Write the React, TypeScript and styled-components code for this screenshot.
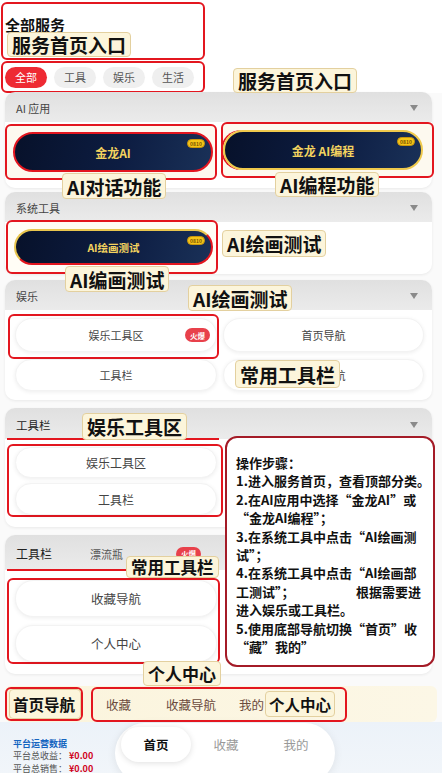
import React from 'react'
import styled, { createGlobalStyle, css } from 'styled-components'

const RED = '#e3161f'

const GlobalStyle = createGlobalStyle`
  * { box-sizing: border-box; }
  html, body { margin: 0; padding: 0; background: #fafafa; }
  body { font-family: "Noto Sans CJK SC", "Noto Sans", sans-serif; }
`

const Page = styled.div`
  position: relative;
  width: 442px;
  height: 773px;
  overflow: hidden;
  display: flex;
  flex-direction: column;
  background: #fafafa;
`

const Top = styled.header`
  flex: none;
  background: #fff;
  padding: 2px 0 0 1px;
  display: flex;
  flex-direction: column;
  gap: 1px;
`

// red annotation frame that wraps a group of content
const Marked = styled.div<{ $w: number; $h: number; $bg?: string; $mt?: number; $ml?: number }>`
  position: relative;
  flex: none;
  width: ${p => p.$w}px;
  height: ${p => p.$h}px;
  margin: ${p => p.$mt ?? 0}px 0 0 ${p => p.$ml ?? 0}px;
  border: 2px solid ${RED};
  border-radius: 6px;
  background: ${p => p.$bg ?? 'transparent'};
`

const TitleBox = styled(Marked)`
  padding: 11px 0 0 2px;
`

const PageTitle = styled.h1`
  margin: 0;
  font-size: 15px;
  font-weight: 700;
  line-height: 20px;
  color: #111;
`

const ChipRow = styled(Marked)`
  display: flex;
  align-items: center;
  gap: 7px;
  padding-left: 2px;
`

const Chip = styled.span<{ $active?: boolean }>`
  width: 42px;
  height: 21px;
  border-radius: 11px;
  display: flex;
  align-items: center;
  justify-content: center;
  font-size: 11px;
  background: ${p => (p.$active ? '#ee2a33' : '#efefef')};
  color: ${p => (p.$active ? '#fff' : '#555')};
`

const Card = styled.section<{ $mt: number }>`
  flex: none;
  margin: ${p => p.$mt}px 10px 0 5px;
  border-radius: 10px;
  background: #fff;
  box-shadow: 0 1px 3px rgba(0, 0, 0, 0.07);
`

const CardHead = styled.div<{ $h?: number; $line?: boolean }>`
  position: relative;
  height: ${p => p.$h ?? 30}px;
  display: flex;
  align-items: center;
  padding: 2px 14px 0 11px;
  border-radius: 10px 10px 0 0;
  background: linear-gradient(180deg, #e0e0e0, #ebebeb);
  ${p =>
    p.$line &&
    css`
      &::after {
        content: '';
        position: absolute;
        left: 2px;
        bottom: -1px;
        width: 212px;
        height: 2px;
        background: ${RED};
      }
    `}
`

const HeadTitle = styled.span<{ $fs?: number; $dark?: boolean }>`
  font-size: ${p => p.$fs ?? 11}px;
  color: ${p => (p.$dark ? '#222' : '#444')};
`

const HeadSub = styled.span`
  margin-left: 38px;
  font-size: 11px;
  color: #555;
`

const Caret = styled.span`
  margin-left: auto;
  width: 0;
  height: 0;
  border-left: 4.5px solid transparent;
  border-right: 4.5px solid transparent;
  border-top: 6px solid #8a8a8a;
`

const HotBadge = styled.span<{ $ml?: number }>`
  display: inline-flex;
  align-items: center;
  justify-content: center;
  width: 25px;
  height: 14px;
  margin-left: ${p => p.$ml ?? 0}px;
  border-radius: 7px;
  background: #e8414b;
  color: #fff;
  font-size: 7.5px;
  font-weight: 700;
`

const PillHot = styled(HotBadge)`
  position: absolute;
  top: 9px;
  right: 6px;
`

const DuoBody = styled.div`
  height: 66px;
  display: grid;
  grid-template-columns: 212px 213px;
  column-gap: 4px;
  align-items: start;
`

const SoloBody = styled.div<{ $h: number }>`
  height: ${p => p.$h}px;
  display: flex;
  flex-direction: column;
`

const PillBox = styled(Marked)<{ $pl: number }>`
  display: flex;
  align-items: center;
  padding-left: ${p => p.$pl}px;
`

const GoldPill = styled.div<{ $w: number; $h: number; $fs: number; $trim: 'red' | 'gold' | 'mix' }>`
  position: relative;
  width: ${p => p.$w}px;
  height: ${p => p.$h}px;
  border-radius: 999px;
  border: 2px solid ${RED};
  ${p =>
    p.$trim === 'gold' &&
    css`
      border-color: #efc94c;
      box-shadow: -2px 0 0 0 ${RED};
    `}
  ${p =>
    p.$trim === 'mix' &&
    css`
      border-top-color: #e8c54e;
      border-left-color: #e8c54e;
    `}
  background: linear-gradient(105deg, #07112a 0%, #0d1d42 55%, #1a3158 100%);
  display: flex;
  align-items: center;
  justify-content: center;
  color: #f3d35f;
  font-weight: 700;
  font-size: ${p => p.$fs}px;
`

const GoldTag = styled.span`
  position: absolute;
  top: 5px;
  right: 6px;
  width: 18px;
  height: 9px;
  border-radius: 5px;
  background: #f5c518;
  border: 1px solid #c9960c;
  font-size: 5px;
  line-height: 7px;
  text-align: center;
  color: #7a5200;
`

const GridBody = styled.div`
  height: 90px;
  display: grid;
  grid-template-columns: 202px 201px;
  grid-template-rows: 34px 32px;
  column-gap: 6px;
  row-gap: 7px;
  padding: 8px 0 0 10px;
`

const ToolPill = styled.div<{ $h?: number; $fs?: number; $marked?: boolean }>`
  position: relative;
  height: ${p => (p.$h ? `${p.$h}px` : 'auto')};
  border-radius: 18px;
  background: #fff;
  border: 1px solid #f3f3f3;
  box-shadow: 0 1px 4px rgba(0, 0, 0, 0.07);
  display: flex;
  align-items: center;
  justify-content: center;
  font-size: ${p => p.$fs ?? 11}px;
  color: #444;
  ${p =>
    p.$marked &&
    css`
      &::after {
        content: '';
        position: absolute;
        inset: -5px -3px -8px -8px;
        border: 2px solid ${RED};
        border-radius: 6px;
      }
    `}
`

const StackBox = styled(Marked)<{ $gap: number; $pt: number }>`
  display: flex;
  flex-direction: column;
  gap: ${p => p.$gap}px;
  padding: ${p => p.$pt}px 0 0 6px;
  ${ToolPill} {
    width: 202px;
  }
`

const Steps = styled.aside`
  position: absolute;
  left: 225px;
  top: 436px;
  width: 210px;
  height: 231px;
  z-index: 3;
  border: 2px solid #a41b27;
  border-radius: 12px;
  background: #fff;
  padding: 16px 6px 0 9px;
  font-size: 13px;
  font-weight: 700;
  line-height: 18.4px;
  color: #111;
`

const StepLine = styled.div<{ $spread?: boolean }>`
  white-space: nowrap;
  ${p =>
    p.$spread &&
    css`
      display: flex;
      justify-content: space-between;
      padding-right: 6px;
    `}
`

const tagLook = css`
  display: flex;
  align-items: center;
  padding: 0 4px;
  background: #fcf5db;
  border: 1px solid #e3d09f;
  border-radius: 4px;
  font-weight: 700;
  color: #111;
  white-space: nowrap;
`

const Tag = styled.span<{ $x: number; $y: number; $h: number; $fs: number }>`
  ${tagLook}
  position: absolute;
  z-index: 4;
  left: ${p => p.$x}px;
  top: ${p => p.$y}px;
  height: ${p => p.$h}px;
  font-size: ${p => p.$fs}px;
`

const InlineTag = styled.span<{ $h: number; $fs: number; $ml?: number }>`
  ${tagLook}
  height: ${p => p.$h}px;
  margin-left: ${p => p.$ml ?? 0}px;
  font-size: ${p => p.$fs}px;
  padding: 0 3px;
`

const NavBar = styled.nav`
  flex: none;
  margin: 12px 5px 0 5px;
  height: 36px;
  display: flex;
  align-items: center;
  background: linear-gradient(90deg, #fbf4dc, #fcf7e6);
  border-radius: 6px;
`

const NavGroup = styled(Marked)`
  display: flex;
  align-items: center;
  padding-left: 13px;
`

const NavLink = styled.span<{ $ml?: number }>`
  margin-left: ${p => p.$ml ?? 0}px;
  font-size: 12.5px;
  color: #6b4a3c;
`

const Footer = styled.footer`
  flex: 1;
  display: flex;
  padding-left: 13px;
  background: linear-gradient(180deg, #ecf2f9, #f2f6fa);
`

const Stats = styled.div`
  width: 102px;
  padding-top: 15px;
  font-size: 9px;
  line-height: 12.5px;
  color: #555;
`

const StatsTitle = styled.div`
  color: #1565c0;
  font-weight: 700;
  line-height: 13px;
`

const Money = styled.b`
  color: #d0021b;
`

const TabPill = styled.div`
  margin-top: 1px;
  width: 220px;
  height: 60px;
  border-radius: 30px;
  background: #fff;
  box-shadow: 0 2px 10px rgba(0, 0, 0, 0.08);
  display: flex;
  align-items: flex-start;
  padding: 4px 4px 0 6px;
`

const Tab = styled.span<{ $active?: boolean }>`
  width: 70px;
  height: 35px;
  border-radius: 18px;
  display: flex;
  align-items: center;
  justify-content: center;
  font-size: 12.5px;
  color: ${p => (p.$active ? '#111' : '#999')};
  font-weight: ${p => (p.$active ? 700 : 400)};
  ${p =>
    p.$active &&
    css`
      background: #fff;
      box-shadow: 0 1px 6px rgba(0, 0, 0, 0.13);
    `}
`

const chips = ['全部', '工具', '娱乐', '生活']

const steps = [
  '操作步骤：',
  '1.进入服务首页，查看顶部分类。',
  '2.在AI应用中选择“金龙AI”或',
  '“金龙AI编程”；',
  '3.在系统工具中点击“AI绘画测',
  '试”；',
  '4.在系统工具中点击“AI绘画部',
  null,
  '进入娱乐或工具栏。',
  '5.使用底部导航切换“首页”收',
  '“藏”我的”',
]

const tags = [
  { t: '服务首页入口', x: 7, y: 32, h: 25, fs: 19 },
  { t: '服务首页入口', x: 233, y: 68, h: 25, fs: 19 },
  { t: 'AI对话功能', x: 62, y: 173, h: 26, fs: 19 },
  { t: 'AI编程功能', x: 275, y: 172, h: 25, fs: 19 },
  { t: 'AI绘画测试', x: 222, y: 230, h: 27, fs: 19 },
  { t: 'AI编画测试', x: 65, y: 266, h: 26, fs: 19 },
  { t: 'AI绘画测试', x: 188, y: 285, h: 26, fs: 19 },
  { t: '常用工具栏', x: 235, y: 360, h: 28, fs: 19 },
  { t: '娱乐工具区', x: 82, y: 413, h: 27, fs: 19 },
  { t: '常用工具栏', x: 126, y: 556, h: 22, fs: 16.5 },
  { t: '个人中心', x: 143, y: 661, h: 25, fs: 17 },
]

const App: React.FC = () => {
  return (
    <Page>
      <GlobalStyle />
      <Top>
        <TitleBox $w={204} $h={58}>
          <PageTitle>全部服务</PageTitle>
        </TitleBox>
        <ChipRow $w={204} $h={32}>
          {chips.map((c, i) => (
            <Chip key={c} $active={i === 0}>{c}</Chip>
          ))}
        </ChipRow>
      </Top>

      <Card $mt={-1}>
        <CardHead>
          <HeadTitle>AI 应用</HeadTitle>
          <Caret />
        </CardHead>
        <DuoBody>
          <PillBox $w={212} $h={56} $mt={2} $pl={6} $bg="#fdf9ef">
            <GoldPill $w={200} $h={40} $fs={12} $trim="red">
              金龙AI
              <GoldTag>0810</GoldTag>
            </GoldPill>
          </PillBox>
          <PillBox $w={213} $h={56} $pl={0} $bg="#fdf9ef">
            <GoldPill $w={200} $h={40} $fs={12} $trim="gold">
              金龙 AI编程
              <GoldTag>0810</GoldTag>
            </GoldPill>
          </PillBox>
        </DuoBody>
      </Card>

      <Card $mt={4}>
        <CardHead>
          <HeadTitle>系统工具</HeadTitle>
          <Caret />
        </CardHead>
        <SoloBody $h={52}>
          <PillBox $w={212} $h={54} $mt={-2} $ml={1} $pl={6} $bg="#fffdf6">
            <GoldPill $w={199} $h={36} $fs={10.5} $trim="mix">
              AI绘画测试
              <GoldTag>0810</GoldTag>
            </GoldPill>
          </PillBox>
        </SoloBody>
      </Card>

      <Card $mt={6}>
        <CardHead>
          <HeadTitle>娱乐</HeadTitle>
          <Caret />
        </CardHead>
        <GridBody>
          <ToolPill $marked>
            娱乐工具区
            <PillHot>火爆</PillHot>
          </ToolPill>
          <ToolPill>首页导航</ToolPill>
          <ToolPill>工具栏</ToolPill>
          <ToolPill>收藏导航</ToolPill>
        </GridBody>
      </Card>

      <Card $mt={8}>
        <CardHead $h={31} $line>
          <HeadTitle $fs={11.5} $dark>工具栏</HeadTitle>
          <Caret />
        </CardHead>
        <SoloBody $h={88}>
          <StackBox $w={216} $h={73} $mt={5} $ml={2} $gap={5} $pt={1}>
            <ToolPill $h={31} $fs={12}>娱乐工具区</ToolPill>
            <ToolPill $h={32} $fs={12}>工具栏</ToolPill>
          </StackBox>
        </SoloBody>
      </Card>

      <Card $mt={8}>
        <CardHead $h={35} $line>
          <HeadTitle $fs={12} $dark>工具栏</HeadTitle>
          <HeadSub>漂流瓶</HeadSub>
          <HotBadge $ml={53}>火爆</HotBadge>
        </CardHead>
        <SoloBody $h={104}>
          <StackBox $w={213} $h={86} $mt={8} $ml={2} $gap={8} $pt={0}>
            <ToolPill $h={37} $fs={12.5}>收藏导航</ToolPill>
            <ToolPill $h={37} $fs={12.5}>个人中心</ToolPill>
          </StackBox>
        </SoloBody>
      </Card>

      <NavBar>
        <Marked $w={78} $h={34}>
          <InlineTag $h={30} $fs={15.5} $ml={2}>首页导航</InlineTag>
        </Marked>
        <NavGroup $w={256} $h={35} $ml={8}>
          <NavLink>收藏</NavLink>
          <NavLink $ml={35}>收藏导航</NavLink>
          <NavLink $ml={23}>我的</NavLink>
          <InlineTag $h={26} $fs={15.5} $ml={1}>个人中心</InlineTag>
        </NavGroup>
      </NavBar>

      <Footer>
        <Stats>
          <StatsTitle>平台运营数据</StatsTitle>
          <div>平台总收益： <Money>¥0.00</Money></div>
          <div>平台总销售： <Money>¥0.00</Money></div>
        </Stats>
        <TabPill>
          <Tab $active>首页</Tab>
          <Tab>收藏</Tab>
          <Tab>我的</Tab>
        </TabPill>
      </Footer>

      <Steps>
        {steps.map((s, i) =>
          s === null ? (
            <StepLine key={i} $spread>
              <span>工测试”；</span>
              <span>根据需要进</span>
            </StepLine>
          ) : (
            <StepLine key={i}>{s}</StepLine>
          )
        )}
      </Steps>

      {tags.map((g, i) => (
        <Tag key={i} $x={g.x} $y={g.y} $h={g.h} $fs={g.fs}>{g.t}</Tag>
      ))}
    </Page>
  )
}

export default App
